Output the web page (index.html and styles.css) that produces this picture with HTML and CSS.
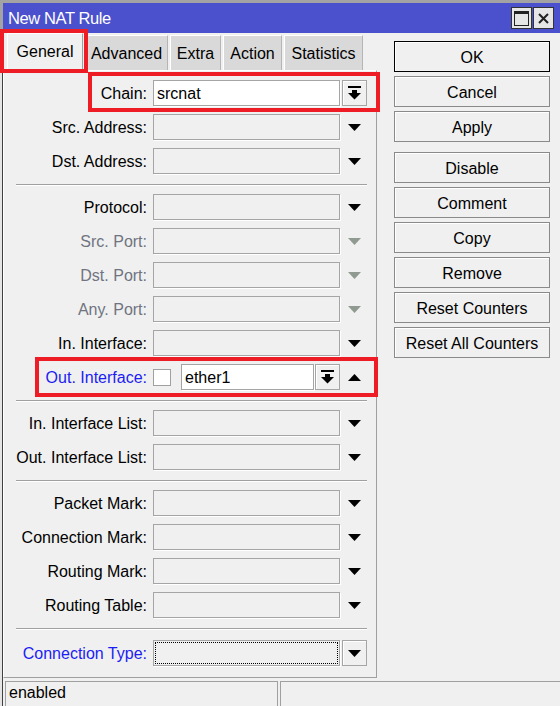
FILE: index.html
```html
<!DOCTYPE html>
<html>
<head>
<meta charset="utf-8">
<link rel="stylesheet" href="styles.css">
</head>
<body>
<div class="window">
  <div class="titlebar">
    <span class="title">New NAT Rule</span>
    <span class="tb-btn"><svg width="15" height="15" viewBox="0 0 15 15"><rect x="0.5" y="0.5" width="14" height="14" fill="none" stroke="#222"/><rect x="0" y="0" width="15" height="3" fill="#222"/></svg></span>
    <span class="tb-btn"><svg width="11" height="11" viewBox="0 0 11 11"><path d="M1 1L10 10M10 1L1 10" stroke="#222" stroke-width="2"/></svg></span>
  </div>
  <div class="main">
    <div class="left">
      <div class="tabs">
        <div class="tab sel">General</div>
        <div class="tab t-adv">Advanced</div>
        <div class="tab t-extra">Extra</div>
        <div class="tab t-action">Action</div>
        <div class="tab t-stat">Statistics</div>
      </div>
      <div class="panel">
        <div class="row"><span class="lbl">Chain:</span><span class="field white">srcnat</span><span class="drop btn"><svg width="13" height="14" viewBox="0 0 13 14"><rect x="0" y="0" width="13" height="2"/><rect x="4" y="4" width="5" height="3"/><polygon points="0,7 13,7 6.5,13.5"/></svg></span></div>
        <div class="row"><span class="lbl">Src. Address:</span><span class="field"></span><span class="drop"><svg class="tri" width="13" height="7" viewBox="0 0 13 7"><polygon points="0,0 13,0 6.5,7"/></svg></span></div>
        <div class="row"><span class="lbl">Dst. Address:</span><span class="field"></span><span class="drop"><svg class="tri" width="13" height="7" viewBox="0 0 13 7"><polygon points="0,0 13,0 6.5,7"/></svg></span></div>
        <div class="sep"></div>
        <div class="row"><span class="lbl">Protocol:</span><span class="field"></span><span class="drop"><svg class="tri" width="13" height="7" viewBox="0 0 13 7"><polygon points="0,0 13,0 6.5,7"/></svg></span></div>
        <div class="row dis"><span class="lbl">Src. Port:</span><span class="field"></span><span class="drop"><svg class="tri" width="13" height="7" viewBox="0 0 13 7"><polygon points="0,0 13,0 6.5,7"/></svg></span></div>
        <div class="row dis"><span class="lbl">Dst. Port:</span><span class="field"></span><span class="drop"><svg class="tri" width="13" height="7" viewBox="0 0 13 7"><polygon points="0,0 13,0 6.5,7"/></svg></span></div>
        <div class="row dis"><span class="lbl">Any. Port:</span><span class="field"></span><span class="drop"><svg class="tri" width="13" height="7" viewBox="0 0 13 7"><polygon points="0,0 13,0 6.5,7"/></svg></span></div>
        <div class="row"><span class="lbl">In. Interface:</span><span class="field"></span><span class="drop"><svg class="tri" width="13" height="7" viewBox="0 0 13 7"><polygon points="0,0 13,0 6.5,7"/></svg></span></div>
        <div class="row"><span class="lbl blue">Out. Interface:</span>
          <span class="combo">
            <span class="check"></span>
            <span class="field white small">ether1</span>
            <span class="mini btn"><svg width="13" height="14" viewBox="0 0 13 14"><rect x="0" y="0" width="13" height="2"/><rect x="4" y="4" width="5" height="3"/><polygon points="0,7 13,7 6.5,13.5"/></svg></span>
          </span>
          <span class="drop"><svg class="tri" width="13" height="7" viewBox="0 0 13 7"><polygon points="0,7 13,7 6.5,0"/></svg></span></div>
        <div class="sep"></div>
        <div class="row"><span class="lbl">In. Interface List:</span><span class="field"></span><span class="drop"><svg class="tri" width="13" height="7" viewBox="0 0 13 7"><polygon points="0,0 13,0 6.5,7"/></svg></span></div>
        <div class="row"><span class="lbl">Out. Interface List:</span><span class="field"></span><span class="drop"><svg class="tri" width="13" height="7" viewBox="0 0 13 7"><polygon points="0,0 13,0 6.5,7"/></svg></span></div>
        <div class="sep"></div>
        <div class="row"><span class="lbl">Packet Mark:</span><span class="field"></span><span class="drop"><svg class="tri" width="13" height="7" viewBox="0 0 13 7"><polygon points="0,0 13,0 6.5,7"/></svg></span></div>
        <div class="row"><span class="lbl">Connection Mark:</span><span class="field"></span><span class="drop"><svg class="tri" width="13" height="7" viewBox="0 0 13 7"><polygon points="0,0 13,0 6.5,7"/></svg></span></div>
        <div class="row"><span class="lbl">Routing Mark:</span><span class="field"></span><span class="drop"><svg class="tri" width="13" height="7" viewBox="0 0 13 7"><polygon points="0,0 13,0 6.5,7"/></svg></span></div>
        <div class="row"><span class="lbl">Routing Table:</span><span class="field"></span><span class="drop"><svg class="tri" width="13" height="7" viewBox="0 0 13 7"><polygon points="0,0 13,0 6.5,7"/></svg></span></div>
        <div class="sep"></div>
        <div class="row ctype"><span class="lbl blue">Connection Type:</span><span class="field focus"></span><span class="drop btn"><svg class="tri" width="13" height="7" viewBox="0 0 13 7"><polygon points="0,0 13,0 6.5,7"/></svg></span></div>
      </div>
    </div>
    <div class="buttons">
      <div class="button default">OK</div>
      <div class="button">Cancel</div>
      <div class="button">Apply</div>
      <div class="button gap">Disable</div>
      <div class="button">Comment</div>
      <div class="button">Copy</div>
      <div class="button">Remove</div>
      <div class="button">Reset Counters</div>
      <div class="button">Reset All Counters</div>
    </div>
  </div>
  <div class="status">
    <div class="cell first">enabled</div>
    <div class="cell rest"></div>
  </div>
</div>
<div class="mark mark-tab"></div>
<div class="mark mark-chain"></div>
<div class="mark mark-out"></div>
</body>
</html>
```
FILE: styles.css
```css
html, body {
  margin: 0;
  padding: 0;
}
body {
  width: 560px;
  height: 706px;
  overflow: hidden;
  background: #f0f0f0;
  font-family: "Liberation Sans", Arial, sans-serif;
  font-size: 16px;
  color: #000;
}
.window {
  height: 706px;
  box-sizing: border-box;
  border-top: 3px solid #a3a3a3;
  background: linear-gradient(to right, #e4e4e4 0 2px, #404040 2px 3px, #f0f0f0 3px);
}
.titlebar {
  height: 30px;
  border-left: 3px solid #a3a3a3;
  background: #4b51cc;
  color: #fff;
  display: flex;
  align-items: center;
  padding: 0 6px 0 5px;
}
.title {
  flex: 1;
  font-size: 16.5px;
  letter-spacing: -0.4px;
  padding-top: 1px;
}
.tb-btn {
  width: 21px;
  height: 22px;
  box-sizing: border-box;
  border: 1px solid #333;
  background: #e6e6e6;
  display: flex;
  align-items: center;
  justify-content: center;
}
.tb-btn + .tb-btn {
  margin-left: 1px;
}
.main {
  display: flex;
  height: 645px;
  padding-left: 3px;
}
.left {
  width: 374px;
  display: flex;
  flex-direction: column;
}
.tabs {
  height: 37px;
  display: flex;
  align-items: flex-end;
  padding-left: 4px;
  position: relative;
  z-index: 1;
}
.tab {
  height: 35px;
  box-sizing: border-box;
  background: #d9d9d9;
  border-top: 1px solid #fff;
  border-left: 1px solid #fff;
  border-right: 1px solid #b5b5b5;
  display: flex;
  align-items: center;
  justify-content: center;
  white-space: nowrap;
  margin-left: 2px;
  padding-top: 2px;
}
.tab.sel {
  height: 37px;
  width: 76px;
  background: #f0f0f0;
  border-right: 1px solid #a0a0a0;
  margin-left: 0;
  padding-top: 0;
  padding-bottom: 1px;
}
.t-adv { width: 83px; margin-left: 2px; }
.t-extra { width: 51px; }
.t-action { width: 59px; }
.t-stat { width: 79px; }
.panel {
  flex: 1;
  box-sizing: border-box;
  border-top: 1px solid #fff;
  border-left: 1px solid #fff;
  border-right: 1px solid #a0a0a0;
  border-bottom: 1px solid #a0a0a0;
  padding: 5px 9px 0 0;
}
.row {
  display: flex;
  align-items: center;
  height: 34px;
}
.lbl {
  width: 143px;
  margin-right: 6px;
  text-align: right;
  white-space: nowrap;
  padding-top: 2px;
}
.blue { color: #1c1cf5; }
.dis .lbl { color: #6f7480; }
.dis .tri { fill: #909a90; }
.field {
  width: 187px;
  height: 26px;
  box-sizing: border-box;
  border: 1px solid #a5a5a5;
  box-shadow: 1px 1px 0 #fff;
  background: #f0f0f0;
  padding-left: 3px;
  padding-top: 1px;
  display: flex;
  align-items: center;
}
.field.white { background: #fff; }
.field.small {
  width: 133px;
  padding-left: 3px;
}
.field.focus {
  outline: 1px dotted #000;
  outline-offset: -3px;
}
.drop {
  width: 25px;
  height: 26px;
  margin-left: 2px;
  box-sizing: border-box;
  display: flex;
  align-items: center;
  justify-content: center;
}
.btn {
  border: 1px solid #a5a5a5;
  box-shadow: inset 1px 1px 0 #fff;
  background: #f0f0f0;
}
.combo {
  width: 187px;
  display: flex;
  align-items: center;
}
.check {
  width: 18px;
  height: 17px;
  box-sizing: border-box;
  border: 1px solid #a0a0a0;
  background: #fff;
  margin-right: 10px;
}
.mini {
  width: 25px;
  height: 26px;
  margin-left: 1px;
  box-sizing: border-box;
  display: flex;
  align-items: center;
  justify-content: center;
}
.ctype {
  margin-top: 2px;
}
.sep {
  height: 12px;
  margin: 0 0 0 12px;
  display: flex;
  align-items: center;
}
.sep::before {
  content: "";
  flex: 1;
  height: 1px;
  background: #a0a0a0;
  box-shadow: 0 1px 0 #fff;
}
.buttons {
  margin-left: 17px;
  width: 156px;
  padding-top: 8px;
  display: flex;
  flex-direction: column;
  gap: 4px;
}
.button {
  height: 31px;
  box-sizing: border-box;
  border: 1px solid #8a8a8a;
  box-shadow: inset 1px 1px 0 #fff;
  display: flex;
  align-items: center;
  justify-content: center;
  white-space: nowrap;
  padding-top: 2px;
}
.button.default {
  border-color: #000;
}
.button.gap {
  margin-top: 6px;
}
.status {
  display: flex;
  height: 25px;
  margin-top: 3px;
  padding-left: 5px;
}
.cell {
  box-sizing: border-box;
  border: 1px solid #a0a0a0;
  border-bottom: none;
  display: flex;
  align-items: center;
  padding-left: 3px;
  padding-bottom: 3px;
}
.cell.first { width: 273px; }
.cell.rest { flex: 1; margin-left: 2px; border-right: none; }
.mark {
  position: absolute;
  box-sizing: border-box;
  border: 4px solid #ee1c25;
  z-index: 5;
}
.mark-tab { left: 0; top: 29px; width: 88px; height: 44px; }
.mark-chain { left: 88px; top: 72px; width: 292px; height: 40px; }
.mark-out { left: 35px; top: 357px; width: 343px; height: 40px; }
```
